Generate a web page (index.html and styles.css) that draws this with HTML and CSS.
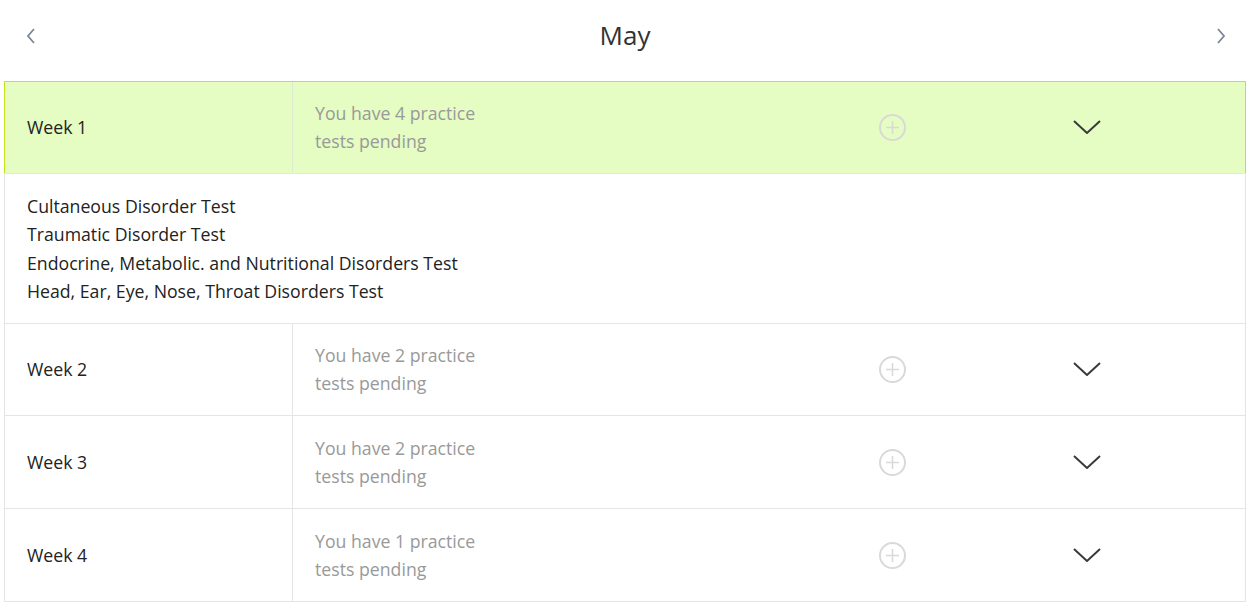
FILE: index.html
```html
<!DOCTYPE html>
<html>
<head>
<meta charset="utf-8">
<link rel="stylesheet" href="styles.css">
</head>
<body>
<div class="page">
  <header class="month-bar">
    <button class="nav prev" aria-label="Previous">
      <svg width="12" height="18" viewBox="0 0 12 18"><path d="M9 2 L3 9 L9 16" fill="none" stroke="#7b8794" stroke-width="1.8"/></svg>
    </button>
    <h1 class="month">May</h1>
    <button class="nav next" aria-label="Next">
      <svg width="12" height="18" viewBox="0 0 12 18"><path d="M3 2 L9 9 L3 16" fill="none" stroke="#7b8794" stroke-width="1.8"/></svg>
    </button>
  </header>

  <div class="weeks">
    <div class="week active">
      <div class="week-name">Week 1</div>
      <div class="week-info">You have 4 practice<br>tests pending</div>
      <div class="plus"><svg width="27" height="27" viewBox="0 0 27 27"><circle cx="13.5" cy="13.5" r="12.5" fill="none" stroke="#d9d9d9" stroke-width="2"/><path d="M13.5 7 V20 M7 13.5 H20" stroke="#d9d9d9" stroke-width="1.6"/></svg></div>
      <div class="spacer"></div>
      <div class="chev"><svg width="28" height="14" viewBox="0 0 28 14"><path d="M1 1 L14 13 L27 1" fill="none" stroke="#3a3a3a" stroke-width="2"/></svg></div>
      <div class="spacer"></div>
    </div>
    <div class="details">
      <div>Cultaneous Disorder Test</div>
      <div>Traumatic Disorder Test</div>
      <div>Endocrine, Metabolic. and Nutritional Disorders Test</div>
      <div>Head, Ear, Eye, Nose, Throat Disorders Test</div>
    </div>
    <div class="week">
      <div class="week-name">Week 2</div>
      <div class="week-info">You have 2 practice<br>tests pending</div>
      <div class="plus"><svg width="27" height="27" viewBox="0 0 27 27"><circle cx="13.5" cy="13.5" r="12.5" fill="none" stroke="#d9d9d9" stroke-width="2"/><path d="M13.5 7 V20 M7 13.5 H20" stroke="#d9d9d9" stroke-width="1.6"/></svg></div>
      <div class="spacer"></div>
      <div class="chev"><svg width="28" height="14" viewBox="0 0 28 14"><path d="M1 1 L14 13 L27 1" fill="none" stroke="#3a3a3a" stroke-width="2"/></svg></div>
      <div class="spacer"></div>
    </div>
    <div class="week">
      <div class="week-name">Week 3</div>
      <div class="week-info">You have 2 practice<br>tests pending</div>
      <div class="plus"><svg width="27" height="27" viewBox="0 0 27 27"><circle cx="13.5" cy="13.5" r="12.5" fill="none" stroke="#d9d9d9" stroke-width="2"/><path d="M13.5 7 V20 M7 13.5 H20" stroke="#d9d9d9" stroke-width="1.6"/></svg></div>
      <div class="spacer"></div>
      <div class="chev"><svg width="28" height="14" viewBox="0 0 28 14"><path d="M1 1 L14 13 L27 1" fill="none" stroke="#3a3a3a" stroke-width="2"/></svg></div>
      <div class="spacer"></div>
    </div>
    <div class="week">
      <div class="week-name">Week 4</div>
      <div class="week-info">You have 1 practice<br>tests pending</div>
      <div class="plus"><svg width="27" height="27" viewBox="0 0 27 27"><circle cx="13.5" cy="13.5" r="12.5" fill="none" stroke="#d9d9d9" stroke-width="2"/><path d="M13.5 7 V20 M7 13.5 H20" stroke="#d9d9d9" stroke-width="1.6"/></svg></div>
      <div class="spacer"></div>
      <div class="chev"><svg width="28" height="14" viewBox="0 0 28 14"><path d="M1 1 L14 13 L27 1" fill="none" stroke="#3a3a3a" stroke-width="2"/></svg></div>
      <div class="spacer"></div>
    </div>
  </div>
</div>
</body>
</html>
```

FILE: styles.css
```css
* { box-sizing: border-box; }
html, body { margin: 0; padding: 0; background: #fff; }
body {
  font-family: "Open Sans", "Noto Sans", sans-serif;
  font-size: 17.7px;
  color: #222;
}
.page { padding: 0 3px 0 4px; }
.month-bar {
  height: 81px;
  display: flex;
  align-items: center;
  justify-content: space-between;
  padding: 0 18px 0 20px;
}
.nav {
  background: none;
  border: 0;
  padding: 0;
  width: 14px;
  height: 20px;
  display: flex;
  align-items: center;
  justify-content: center;
  cursor: pointer;
  margin-top: -10px;
}
.month {
  margin: 0;
  font-size: 26px;
  font-weight: 400;
  color: #333;
  margin-top: -11px;
  margin-left: -2px;
}
.weeks {
  border: 1px solid #e5e5e5;
  border-top: 0;
}
.week {
  display: grid;
  grid-template-columns: 288px 586px 27px 167px 28px 1fr;
  align-items: center;
  border-top: 1px solid #e5e5e5;
  height: 92.9px;
}
.week.active {
  background: #e5fcc2;
  border-top: 1px solid #c8e31c;
  margin: 0 -1px;
  border-left: 1px solid #c8e31c;
  border-right: 1px solid #c8e31c;
  height: 92px;
  padding-bottom: 1px;
}
.week-name {
  align-self: stretch;
  display: flex;
  align-items: center;
  padding-left: 22px;
  border-right: 1px solid #e5e5e5;
  line-height: 28px;
}
.week.active .week-name { border-right-color: #dfe8d0; }
.week-info {
  color: #999;
  padding-left: 22px;
  line-height: 28px;
}
.plus, .chev { display: flex; align-items: center; justify-content: center; }
.plus svg, .chev svg { display: block; }
.details {
  border-top: 1px solid #e5e5e5;
  padding: 18px 22px 17px;
  line-height: 28.3px;
  height: 149.5px;
}
```
